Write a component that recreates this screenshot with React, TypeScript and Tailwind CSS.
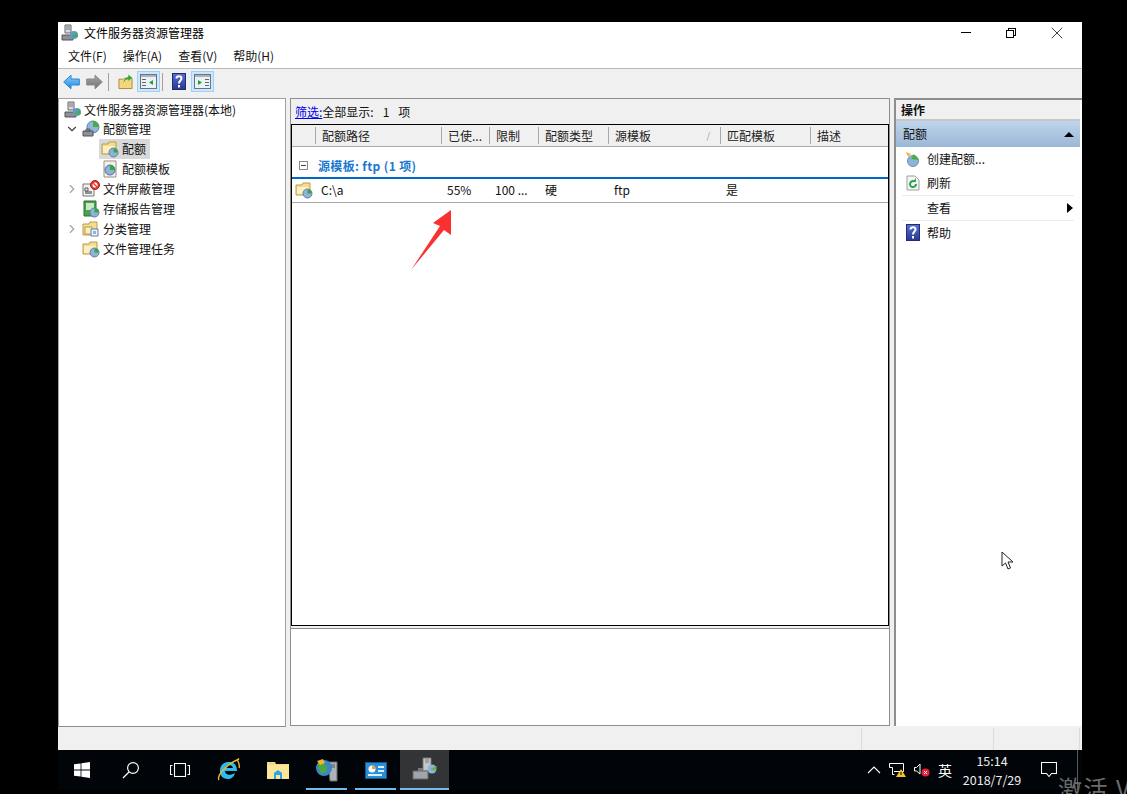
import type { ReactNode } from "react";
import { ChevronDown, ChevronRight, X } from "lucide-react";

const Folder = () => (
  <svg width="18" height="18" viewBox="0 0 18 18">
    <path d="M1 4h6l1-2h7v12H1z" fill="#f6dc8f" stroke="#b89b4e" />
    <path d="M2 6h12v7H2z" fill="#fdf0c0" />
    <circle cx="12.5" cy="12.5" r="4.5" fill="#8fb2d8" stroke="#5d7fa8" />
    <path d="M12.5 12.5V8.5a4 4 0 0 1 4 4z" fill="#35a83a" />
  </svg>
);

const Server = () => (
  <svg width="18" height="18" viewBox="0 0 18 18">
    <path d="M4 1h6v8H4z" fill="#d8dce0" stroke="#666" />
    <path d="M5 3h4M5 5h4" stroke="#777" />
    <path d="M1 11h11v5H1z" fill="#8c9298" stroke="#555" />
    <circle cx="13" cy="11" r="4" fill="#5f9bd0" />
    <path d="M13 11l-3 2h7l-2-5z" fill="#4aae3c" />
  </svg>
);

const QuotaMgmt = () => (
  <svg width="18" height="18" viewBox="0 0 18 18">
    <circle cx="11" cy="7" r="6" fill="#8fb8de" stroke="#5d7fa8" />
    <path d="M11 7V1a6 6 0 0 1 6 6z" fill="#49ad3a" />
    <path d="M1 11h10v5H1z" fill="#8c9298" stroke="#555" />
    <path d="M4 9h4v2H4z" fill="none" stroke="#555" />
  </svg>
);

const Template = () => (
  <svg width="18" height="18" viewBox="0 0 18 18">
    <path d="M3 1h12v16H3z" fill="#f4f2ec" stroke="#9b8f80" />
    <circle cx="9" cy="10" r="5" fill="#8fb2d8" stroke="#4f6f98" />
    <path d="M9 10V5a5 5 0 0 1 5 5z" fill="#35a83a" />
  </svg>
);

const Screen = () => (
  <svg width="18" height="18" viewBox="0 0 18 18">
    <path d="M1 4h11v12H1z" fill="#f2f2f2" stroke="#777" />
    <path d="M3 11h7v3H3z" fill="#8c9298" />
    <path d="M3 8h3v3H3z" fill="none" stroke="#555" />
    <circle cx="13" cy="5" r="4.5" fill="#e8392f" stroke="#a52018" />
    <circle cx="13" cy="5" r="2.5" fill="#fff" />
    <path d="M11 3l4 4" stroke="#e8392f" strokeWidth="1.3" />
  </svg>
);

const Report = () => (
  <svg width="18" height="18" viewBox="0 0 18 18">
    <path d="M2 1h12v15H2z" fill="#45a34a" stroke="#2c6e32" />
    <path d="M4 3h8v7H4z" fill="#c9e8c6" />
    <circle cx="12.5" cy="12.5" r="4.5" fill="#8fb2d8" stroke="#5d7fa8" />
    <path d="M12.5 12.5V8a4.5 4.5 0 0 1 4.5 4.5z" fill="#35a83a" />
  </svg>
);

const Classify = () => (
  <svg width="18" height="18" viewBox="0 0 18 18">
    <path d="M1 4h6l1-2h7v13H1z" fill="#f6dc8f" stroke="#b89b4e" />
    <path d="M3 7h7v7H3z" fill="#fdf0c0" stroke="#b89b4e" />
    <path d="M9 9h7v7H9z" fill="#eef3fa" stroke="#5d7fa8" />
    <path d="M11 11h3v3h-3z" fill="#8fb2d8" />
  </svg>
);

const HelpIcon = () => (
  <svg width="14" height="17" viewBox="0 0 14 17">
    <defs>
      <linearGradient id="helpFill" x1="0" y1="0" x2="0" y2="1">
        <stop offset="0" stopColor="#5a6fd0" />
        <stop offset="1" stopColor="#26388f" />
      </linearGradient>
    </defs>
    <rect x="0.5" y="0.5" width="13" height="16" fill="url(#helpFill)" stroke="#1e2d75" />
    <path d="M4.5 5.5c0-3 5-3 5 0 0 2-2.5 2-2.5 5" fill="none" stroke="#fff" strokeWidth="2" />
    <rect x="6" y="12" width="2" height="2.5" fill="#fff" />
  </svg>
);

const PaneIcon = ({ flip = false }: { flip?: boolean }) => (
  <div className="flex h-[21px] w-[23px] items-center justify-center border border-[#99d1ff] bg-[#cce8ff]">
    <svg width="17" height="15" viewBox="0 0 17 15">
      <rect x="0.5" y="0.5" width="16" height="14" fill="#eaf2f8" stroke="#6d7378" />
      <path d="M1 1h15v2H1z" fill="#aab2ba" />
      {flip ? (
        <>
          <path d="M4 6l4 2.5L4 11z" fill="#23a036" />
          <path d="M11 5h4v1h-4zM11 8h4v1h-4zM11 11h4v1h-4z" fill="#666" />
        </>
      ) : (
        <>
          <path d="M13 6L9 8.5l4 2.5z" fill="#23a036" />
          <path d="M2 5h4v1H2zM2 8h4v1H2zM2 11h4v1H2z" fill="#666" />
        </>
      )}
    </svg>
  </div>
);

const NavArrow = ({ id, top, bottom, edge, flip = false }: { id: string; top: string; bottom: string; edge: string; flip?: boolean }) => (
  <svg width="17" height="16" viewBox="0 0 17 16" className={flip ? "rotate-180" : ""}>
    <defs>
      <linearGradient id={id} x1="0" y1="0" x2="0" y2="1">
        <stop offset="0" stopColor={flip ? bottom : top} />
        <stop offset="1" stopColor={flip ? top : bottom} />
      </linearGradient>
    </defs>
    <path d="M.7 8L8 1.2V5h8.3v6H8v3.8z" fill={`url(#${id})`} stroke={edge} strokeLinejoin="round" />
  </svg>
);

function TreeRow({ indent, arrow, icon, label, selected }: {
  indent: string;
  arrow?: "down" | "right";
  icon: ReactNode;
  label: string;
  selected?: boolean;
}) {
  return (
    <div className={`flex h-5 items-center ${indent}`}>
      <div className="flex w-[17px] shrink-0 items-center justify-center">
        {arrow === "down" && <ChevronDown size={14} strokeWidth={2} className="text-[#444]" />}
        {arrow === "right" && <ChevronRight size={14} strokeWidth={2} className="text-[#a6a6a6]" />}
      </div>
      <div className={`flex h-5 items-center ${selected ? "bg-[#d9d9d9]" : ""}`}>
        <div className="flex w-[22px] pl-[2px]">{icon}</div>
        <span className="pl-[1px] pr-[4px] text-[12px] text-[#111]">{label}</span>
      </div>
    </div>
  );
}

const columns = [
  { label: "", w: "w-[23px]" },
  { label: "配额路径", w: "w-[126px]" },
  { label: "已使...", w: "w-[48px]" },
  { label: "限制", w: "w-[49px]" },
  { label: "配额类型", w: "w-[70px]" },
  { label: "源模板", w: "w-[112px]" },
  { label: "匹配模板", w: "w-[90px]" },
  { label: "描述", w: "flex-1" },
];

function ActionRow({ icon, label, arrow, line }: { icon?: ReactNode; label: string; arrow?: boolean; line?: boolean }) {
  return (
    <div className={`mx-[6px] flex h-[24.5px] items-center ${line ? "border-b border-[#ececec]" : ""}`}>
      <div className="flex w-[25px] justify-center pr-[4px]">{icon}</div>
      <span className="text-[12px] text-[#111]">{label}</span>
      {arrow && <div className="ml-auto mr-[1px] h-0 w-0 border-y-[5px] border-l-[6px] border-y-transparent border-l-black" />}
    </div>
  );
}

const TaskSlot = ({ children, active, line, first }: { children?: ReactNode; active?: boolean; line?: boolean; first?: boolean }) => (
  <div className={`relative flex h-10 items-center justify-center ${first ? "w-[48px]" : "w-[49px]"} ${active ? "bg-[#333436]" : ""}`}>
    {children}
    {line && <div className={`absolute bottom-0 h-[2px] bg-[#76b9ed] ${active ? "inset-x-0" : "inset-x-[4px]"}`} />}
  </div>
);

export default function App() {
  return (
    <div className="relative h-[794px] w-[1127px] overflow-hidden bg-black font-['Noto_Sans_CJK_SC','Noto_Sans',sans-serif]">
      <div className="ml-[58px] w-[1024px] pt-[22px]">
        <div className="flex h-[728px] flex-col bg-[#f0f0f0]">
          {/* title bar */}
          <div className="flex h-[22px] items-center bg-white pb-[1px]">
            <div className="ml-[2px] flex w-[19px] justify-center"><Server /></div>
            <span className="ml-[5px] text-[12px] text-black">文件服务器资源管理器</span>
            <div className="ml-auto flex items-center">
              <div className="mr-[35px] h-px w-[10px] bg-black" />
              <div className="relative mr-[31px] h-[10px] w-[10px]">
                <div className="absolute left-[2px] top-0 h-[8px] w-[8px] border border-black" />
                <div className="absolute bottom-0 left-0 h-[8px] w-[8px] border border-black bg-white" />
              </div>
              <X size={20} className="mr-[15px] text-black" strokeWidth={0.9} />
            </div>
          </div>
          {/* menu bar */}
          <div className="flex h-[25px] items-center gap-[16px] border-b border-[#b9b9b9] bg-white pl-[10px] text-[12px] text-[#111]">
            <span>文件(F)</span>
            <span>操作(A)</span>
            <span>查看(V)</span>
            <span>帮助(H)</span>
          </div>
          {/* toolbar */}
          <div className="flex h-[25px] items-center bg-[#f0f0f0] pl-[5px]">
            <NavArrow id="navBack" top="#8fd3fb" bottom="#1f84dc" edge="#2a86d0" />
            <div className="ml-[6px]"><NavArrow id="navFwd" top="#a8a8a8" bottom="#6f6f6f" edge="#8a8a8a" flip /></div>
            <div className="ml-[5px] h-[18px] w-px bg-[#a0a0a0]" />
            <div className="ml-[9px] flex w-[15px] justify-center">
              <svg width="16" height="17" viewBox="0 0 16 17">
                <path d="M1 6h5l1-1h8v11H1z" fill="#f2d77e" stroke="#a88a3c" />
                <path d="M6 10c0-4 3-6 5-6V1l4 3.5L11 8V6c-2 0-4 1-5 4z" fill="#2fa83a" />
              </svg>
            </div>
            <div className="ml-[4px]"><PaneIcon /></div>
            <div className="ml-[2px] h-[18px] w-px bg-[#a0a0a0]" />
            <div className="ml-[9px] flex w-[14px] justify-center"><HelpIcon /></div>
            <div className="ml-[5px]"><PaneIcon flip /></div>
          </div>
          {/* panes */}
          <div className="flex h-[634px] items-start gap-[4px] pt-[4px]">
            <div className="h-[629px] w-[228px] border border-[#a0a0a0] border-b-[#8e8e8e] bg-white pt-[1px]">
              <div className="-mb-px flex h-5 items-center pl-[4px]">
                <div className="flex w-[19px] justify-center"><Server /></div>
                <span className="ml-[2px] text-[12px] text-[#111]">文件服务器资源管理器(本地)</span>
              </div>
              <TreeRow indent="pl-[4px]" arrow="down" icon={<QuotaMgmt />} label="配额管理" />
              <TreeRow indent="pl-[23px]" icon={<Folder />} label="配额" selected />
              <TreeRow indent="pl-[23px]" icon={<Template />} label="配额模板" />
              <TreeRow indent="pl-[4px]" arrow="right" icon={<Screen />} label="文件屏蔽管理" />
              <TreeRow indent="pl-[4px]" icon={<Report />} label="存储报告管理" />
              <TreeRow indent="pl-[4px]" arrow="right" icon={<Classify />} label="分类管理" />
              <TreeRow indent="pl-[4px]" icon={<Folder />} label="文件管理任务" />
            </div>

            <div className="flex w-[600px] flex-col border-x border-x-[#8e8e8e]">
              <div className="flex h-[26px] items-center border-t border-t-[#8e8e8e] bg-[#f0f0f0] pl-[4px] text-[12px] text-[#111]">
                <span className="text-[#0000ee] underline">筛选:</span>
                <span>全部显示:</span>
                <span className="ml-[9px]">1</span>
                <span className="ml-[9px]">项</span>
              </div>
              <div className="flex h-[502px] flex-col border border-black bg-white">
                <div className="flex h-[22px] shrink-0 border-b border-[#a8a8a8] bg-[#f0f0f0] text-[12px] text-[#222]">
                  {columns.map((c, i) => (
                    <div key={i} className={`${c.w} relative flex items-center pl-[6px] ${i > 0 ? "my-[2px] border-l border-[#a8a8a8]" : ""}`}>
                      {c.label}
                      {c.label === "源模板" && <span className="absolute right-[10px] text-[9px] text-[#999]">/</span>}
                    </div>
                  ))}
                </div>
                <div className="flex h-[32px] shrink-0 items-center border-b-2 border-[#0066cc] pl-[7px] pt-[7px]">
                  <div className="flex h-[9px] w-[9px] items-center justify-center border border-[#888] bg-white">
                    <div className="h-px w-[5px] bg-[#444]" />
                  </div>
                  <span className="ml-[10px] text-[12px] font-bold tracking-[0.35px] text-[#1a78d0]">源模板: ftp (1 项)</span>
                </div>
                <div className="flex h-[24px] shrink-0 items-center border-b border-[#a8a8a8] pb-[1px] text-[12px] text-[#111]">
                  <div className="flex w-[24px] justify-center pr-[1px]"><Folder /></div>
                  <div className="w-[126px] pl-[5px]">C:\a</div>
                  <div className="w-[48px] pl-[5px]">55%</div>
                  <div className="w-[49px] pl-[5px]">100 ...</div>
                  <div className="w-[70px] pl-[6px]">硬</div>
                  <div className="w-[112px] pl-[5px]">ftp</div>
                  <div className="w-[90px] pl-[5px]">是</div>
                </div>
              </div>
              <div className="mt-[2px] h-[98px] border-y border-y-[#8e8e8e] bg-white" />
            </div>

            <div className="flex h-[628px] w-[188px] flex-col border-l-2 border-t-2 border-[#8e8e8e] bg-white pr-[2px]">
              <div className="flex h-[21px] items-center border-b-2 border-[#c8c8c8] bg-[#f0f0f0] pl-[5px] text-[12px] font-bold text-[#111]">操作</div>
              <div className="flex h-[26px] items-center justify-between bg-gradient-to-b from-[#bed5ec] to-[#9cb7d6] pl-[7px] pr-[6px] text-[12px] text-[#111]">
                配额
                <div className="h-0 w-0 border-x-[5px] border-b-[5px] border-x-transparent border-b-black" />
              </div>
              <ActionRow label="创建配额..." icon={
                <svg width="16" height="16" viewBox="0 0 16 16">
                  <circle cx="8" cy="10" r="5.5" fill="#8fb2d8" stroke="#6d8fb5" />
                  <path d="M6 8l3-5 5 6z" fill="#4aae3c" />
                  <path d="M1 1l5 2-3 3z" fill="#f0b92c" />
                </svg>
              } />
              <ActionRow line label="刷新" icon={
                <svg width="14" height="16" viewBox="0 0 14 16">
                  <path d="M1 1h8l4 4v10H1z" fill="#f4f4f4" stroke="#a0a0a0" />
                  <path d="M10 9a3 3 0 1 1-1.5-2.5" fill="none" stroke="#2aa34a" strokeWidth="2" />
                  <path d="M10 3v4H7z" fill="#2aa34a" />
                </svg>
              } />
              <ActionRow line label="查看" arrow />
              <ActionRow label="帮助" icon={<HelpIcon />} />
            </div>
          </div>
          {/* status bar */}
          <div className="mt-auto flex h-[22px] bg-[#f0f0f0]">
            <div className="w-[804px] border-r border-[#dcdcdc]" />
            <div className="w-[132px] border-r border-[#dcdcdc]" />
            <div className="w-[86px] border-r border-[#dcdcdc]" />
          </div>
        </div>

        {/* taskbar */}
        <div className="flex h-10 items-center bg-[#010409] text-white">
          <TaskSlot first>
            <svg width="16" height="16" viewBox="0 0 16 16" fill="#fff">
              <path d="M0 2.3l6.6-.9v6.2H0zM7.4 1.3L16 0v7.6H7.4zM0 8.4h6.6v6.2L0 13.7zM7.4 8.4H16V16l-8.6-1.2z" />
            </svg>
          </TaskSlot>
          <TaskSlot>
            <svg width="18" height="18" viewBox="0 0 18 18" fill="none" stroke="#fff" strokeWidth="1.2">
              <circle cx="11" cy="7" r="5.4" />
              <path d="M7 11l-6 6" />
            </svg>
          </TaskSlot>
          <TaskSlot>
            <svg width="20" height="14" viewBox="0 0 20 14" fill="none" stroke="#fff" strokeWidth="1.1">
              <rect x="4.5" y="0.5" width="11" height="13" />
              <path d="M2.5 2.5H.5v9h2M17.5 2.5h2v9h-2" />
            </svg>
          </TaskSlot>
          <TaskSlot>
            <svg width="24" height="24" viewBox="0 0 24 24">
              <path d="M3 13c0-6 4-9 9-9s8 3 8 9H8c0 4 5 5 10 2-1 4-4 6-7 6-5 0-8-3-8-8z" fill="#2ebcf0" />
              <path d="M8 10h8c-1-4-7-4-8 0z" fill="#010409" />
              <path d="M2 22c-2-3 4-14 20-21-4 0 2 5 0 9" fill="none" stroke="#e9b82c" strokeWidth="1.4" />
            </svg>
          </TaskSlot>
          <TaskSlot>
            <svg width="22" height="18" viewBox="0 0 22 18">
              <path d="M0 1h8l1 2h13v15H0z" fill="#f5d97e" />
              <path d="M0 4h22v14H0z" fill="#fbe59a" />
              <path d="M7 12l4-3 4 3v6H7z" fill="#2aa6e0" />
              <path d="M9 14h4v4H9z" fill="#fbe59a" />
            </svg>
          </TaskSlot>
          <TaskSlot line>
            <svg width="24" height="25" viewBox="0 0 24 25">
              <path d="M13 4h9v19h-7z" fill="#aeb3b8" stroke="#666" />
              <path d="M15 7h5M15 9h5" stroke="#555" />
              <circle cx="9" cy="10" r="8" fill="#3a86c8" />
              <path d="M4 5c4-1 5 2 7 3s1 5-2 7-4-2-5-4-2-5 0-6z" fill="#4fa83c" />
              <path d="M2 3l6-2 2 4-5 2z" fill="#e9b82c" />
            </svg>
          </TaskSlot>
          <TaskSlot line>
            <svg width="22" height="17" viewBox="0 0 22 17">
              <rect x="0.5" y="0.5" width="21" height="16" fill="#2a8fd6" stroke="#13588c" />
              <circle cx="7" cy="7" r="3.5" fill="#fff" />
              <path d="M7 7V3.5A3.5 3.5 0 0 1 10.5 7z" fill="#e9a23c" />
              <path d="M13 4h6v2h-6zM13 8h6v2h-6zM3 12h14v2H3z" fill="#d7eefb" />
            </svg>
          </TaskSlot>
          <TaskSlot line active>
            <svg width="26" height="26" viewBox="0 0 26 26">
              <path d="M11 1h8v13h-8z" fill="#c4c8cc" stroke="#777" />
              <path d="M13 3h4M13 5h4" stroke="#777" />
              <path d="M1 14h15v8H1z" fill="#a0a5aa" stroke="#666" />
              <path d="M6 11h5v3H6z" fill="#777" />
              <circle cx="20" cy="12" r="4.5" fill="#8fb2d8" />
              <path d="M18 12l7-3-2 5z" fill="#5cb84a" />
            </svg>
          </TaskSlot>
          <div className="ml-auto flex items-center">
            <svg width="14" height="8" viewBox="0 0 14 8" fill="none" stroke="#fff" strokeWidth="1.1" className="mr-[8px]">
              <path d="M1 7l6-6 6 6" />
            </svg>
            <svg width="18" height="14" viewBox="0 0 18 14" className="mr-[7px]" fill="none" stroke="#fff">
              <path d="M.5.5h14v8H5M.5.5v4h3v7h2" />
              <path d="M12 6l5 8H7z" fill="#f7c325" stroke="none" />
              <path d="M12 9v3" stroke="#000" />
            </svg>
            <svg width="16" height="14" viewBox="0 0 16 14" className="mr-[8px]" fill="none" stroke="#fff">
              <path d="M.5 4.5h2L6 1v10L2.5 8h-2z" />
              <circle cx="11.5" cy="9.5" r="4" fill="#e81f3a" stroke="none" />
              <path d="M10 8l3 3M13 8l-3 3" stroke="#fff" />
            </svg>
            <span className="mr-[4px] text-[14px]">英</span>
            <div className="mr-[13px] flex w-[72px] flex-col items-center text-[12.5px] leading-[19px] text-[#eee]">
              <span>15:14</span>
              <span>2018/7/29</span>
            </div>
            <svg width="16" height="16" viewBox="0 0 16 16" fill="none" stroke="#fff" strokeWidth="1.1" className="mr-[25px]">
              <path d="M.5.5h15v11h-5L8 14.5 5.5 11.5h-5z" />
            </svg>
          </div>
        </div>
      </div>

      {/* red annotation arrow */}
      <svg width="42" height="62" viewBox="0 0 42 62" className="absolute left-[410px] top-[209px]">
        <path d="M1 61L30 17 23 14 41 1 41 26 34 21z" fill="#fb3131" />
      </svg>

      {/* mouse cursor */}
      <svg width="14" height="20" viewBox="0 0 14 20" className="absolute left-[1001px] top-[551px]">
        <path d="M1 1v14l3.5-3 2.5 6 2.5-1-2.5-6H12z" fill="#fff" stroke="#222" />
      </svg>

      {/* watermark with the thin line over the taskbar */}
      <div className="absolute left-[1077px] top-[750px] h-10 w-px bg-[#5a5a5a]" />
      <span className="absolute left-[1058px] top-[771px] whitespace-nowrap text-[24px] leading-[34px] tracking-[1.5px] text-[#6b6b6b]">激活 V</span>
    </div>
  );
}
